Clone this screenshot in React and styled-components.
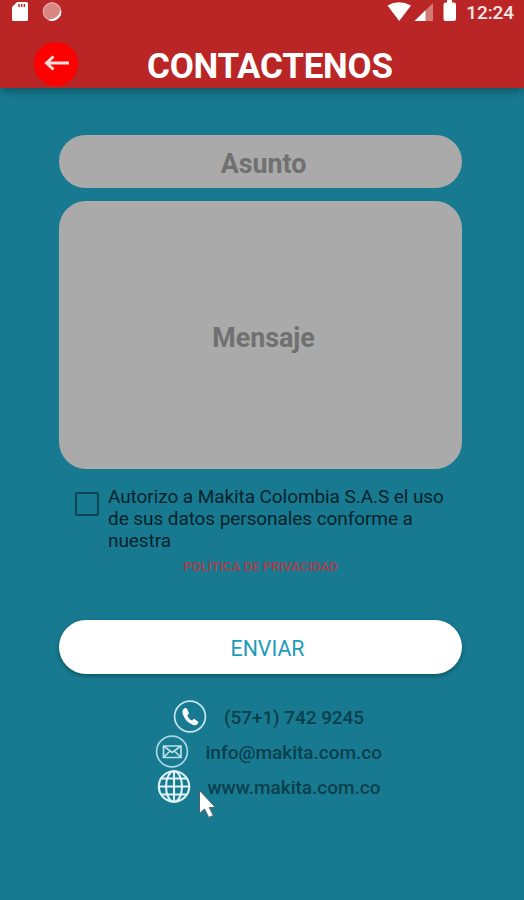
import React from "react";
import styled, { createGlobalStyle } from "styled-components";

const GlobalStyle = createGlobalStyle`
  * { box-sizing: border-box; }
  body { margin: 0; background: #187a91; font-family: Roboto, "Liberation Sans", sans-serif; }
`;

const Screen = styled.div`
  position: relative;
  display: flex;
  flex-direction: column;
  width: 524px;
  height: 900px;
  overflow: hidden;
  background: #187a91;
`;

const Header = styled.header`
  flex: none;
  height: 88px;
  background: #b92625;
  box-shadow: 0 2px 10px rgba(0, 40, 45, 0.55);
`;

const StatusBar = styled.div`
  display: flex;
  justify-content: space-between;
  height: 24px;
  padding: 0 10px 0 11px;
`;

const StatusGroup = styled.div`
  display: flex;
  align-items: flex-start;
`;

const Clock = styled.span`
  margin-left: 9px;
  font-size: 19px;
  font-weight: 500;
  line-height: 26px;
  letter-spacing: -0.1px;
  color: #fbe9e9;
`;

const TitleBar = styled.div`
  display: flex;
  align-items: center;
  height: 64px;
  padding: 17px 0 0 34px;
`;

const BackButton = styled.button`
  display: flex;
  flex: none;
  align-items: center;
  justify-content: center;
  width: 44px;
  height: 44px;
  margin-top: -2px;
  padding: 0;
  border: 0;
  border-radius: 50%;
  background: #ff0000;
`;

const Title = styled.h1`
  margin: 5px 0 0 69px;
  font-size: 35px;
  font-weight: 700;
  line-height: 40px;
  letter-spacing: -0.25px;
  color: #fff;
`;

const Form = styled.main`
  display: flex;
  flex-direction: column;
  width: 403px;
  margin: 47px 0 0 59px;
`;

const Field = styled.div`
  display: flex;
  align-items: center;
  justify-content: center;
  height: ${(p) => p.$height}px;
  margin-bottom: 13px;
  padding: ${(p) => p.$top}px 0 0 6px;
  border-radius: 27px;
  background: #aaa;
  color: #707070;
  font-size: 26.8px;
  font-weight: 700;
`;

const Consent = styled.label`
  display: flex;
  margin-top: 4px;
  padding-left: 16px;
  gap: 9px;
`;

const Checkbox = styled.span`
  flex: none;
  width: 24px;
  height: 24px;
  margin-top: 6px;
  border: 2.5px solid #0c4653;
  border-radius: 2px;
`;

const ConsentText = styled.span`
  font-size: 19px;
  line-height: 22px;
  letter-spacing: -0.08px;
  white-space: nowrap;
  color: #04232b;
`;

const PolicyLink = styled.a`
  height: 14px;
  margin-top: 8px;
  font-size: 13px;
  font-weight: 500;
  line-height: 14px;
  text-align: center;
  letter-spacing: 0.05px;
  color: #b03d47;
`;

const SendButton = styled.button`
  height: 54px;
  margin-top: 46px;
  padding: 2px 0 0 14px;
  border: 0;
  border-radius: 27px;
  background: #fff;
  box-shadow: 0 2px 4px rgba(0, 45, 50, 0.5);
  color: #1d9bb8;
  font-family: inherit;
  font-size: 21.3px;
`;

const Contacts = styled.footer`
  display: flex;
  flex-direction: column;
  align-items: center;
  margin-top: 25px;
  padding-left: 13px;
`;

const ContactRow = styled.div`
  display: flex;
  align-items: center;
  height: 35px;
  gap: 17px;
`;

const ContactText = styled.span`
  width: ${(p) => p.$width}px;
  padding-top: 2px;
  font-size: 19px;
  font-weight: 500;
  white-space: nowrap;
  letter-spacing: ${(p) => p.$spacing}px;
  color: #093f4d;
`;

const Cursor = styled.svg`
  position: absolute;
  left: 198px;
  top: 789px;
`;

const PhoneIcon = () => (
  <svg width="34" height="34" viewBox="0 0 34 34" fill="none">
    <circle cx="17" cy="16.500" r="15.4" stroke="#c5e5ed" strokeWidth="1.7" />
    <path d="M11.500 8.300c-2.300 1.300-2.700 3.700-1.300 7 1.800 4.400 5 7.700 9.200 9.400 2.700 1 4.600.4 5.700-1.800.3-.6.1-1-.3-1.300l-3-2.300c-.6-.4-1.100-.4-1.600.1l-1.200 1.100c-2.100-.9-4-3.100-4.700-5.300l1.200-1.100c.4-.4.5-.9.300-1.400l-1.800-4c-.5-.8-1.500-1-2.500-.4z" fill="#fff" />
  </svg>
);

const MailIcon = () => (
  <svg width="34" height="34" viewBox="0 0 34 34" fill="none">
    <circle cx="17" cy="16.500" r="15.4" stroke="#a8d5e1" strokeWidth="1.7" />
    <path d="M8.500 11h17.500v11.500h-17.500zM8.500 11l8.700 6.500 8.800-6.500M8.500 22.500l6.500-6.500M26 22.500l-6.500-6.500" stroke="#b9dfe8" strokeWidth="1.7" />
  </svg>
);

const GlobeIcon = () => (
  <svg width="34" height="34" viewBox="0 0 34 34" fill="none" stroke="#dff4f8" strokeWidth="2.1">
    <circle cx="17" cy="16.500" r="15.2" />
    <ellipse cx="17" cy="16.500" rx="8" ry="15.2" />
    <path d="M17 1.500v30M2 16.500h30M4.500 8.500h25M4.500 24.500h25" />
  </svg>
);

const contacts = [
  { text: "(57+1) 742 9245", width: 140, spacing: -0.08, Icon: PhoneIcon },
  { text: "info@makita.com.co", width: 177, spacing: 0, Icon: MailIcon },
  { text: "www.makita.com.co", width: 173, spacing: 0, Icon: GlobeIcon },
];

export default function App() {
  return (
    <>
      <GlobalStyle />
      <Screen>
        <Header>
          <StatusBar>
            <StatusGroup>
              <svg width="54" height="24" viewBox="0 0 54 24">
                <path d="M6 2h9.500q1.500 0 1.500 1.500v16q0 1.500-1.500 1.500h-13q-1.500 0-1.500-1.500V7z" fill="#fff" />
                <path d="M8 4v3M10.700 4v3M13.400 4v3" stroke="#b92625" strokeWidth="1.400" />
                <circle cx="41" cy="11.500" r="9.300" fill="#d98683" />
                <circle cx="41" cy="11.500" r="8.700" fill="none" stroke="#e5a9a6" strokeWidth="1.200" />
                <path d="M50 9.500a9.300 9.300 0 0 1-13 10.500q10.500-1 13-10.500z" fill="#fff" />
              </svg>
            </StatusGroup>
            <StatusGroup>
              <svg width="70" height="24" viewBox="388 0 70 24">
                <path d="M388.500 5.500Q400-1 412 5.500L400.200 21z" fill="#fff" />
                <path d="M434 3v18h-18.500z" fill="#d37a77" />
                <path d="M426.500 10.300V21h-11z" fill="#fff" />
                <path d="M448 0h5v2.500h2q2 0 2 2V19q0 2-2 2h-8.500q-2 0-2-2V4.500q0-2 2-2h1.500z" fill="#fff" />
              </svg>
              <Clock>12:24</Clock>
            </StatusGroup>
          </StatusBar>
          <TitleBar>
            <BackButton aria-label="Volver">
              <svg width="28" height="20" viewBox="0 0 28 20" fill="none" stroke="#ffdede" strokeWidth="3">
                <path d="M27 9H4.500M11.500 2.500L4.500 9l7 6.500" />
              </svg>
            </BackButton>
            <Title>CONTACTENOS</Title>
          </TitleBar>
        </Header>
        <Form>
          <Field $height={53} $top={4}>Asunto</Field>
          <Field $height={268} $top={5}>Mensaje</Field>
          <Consent>
            <Checkbox />
            <ConsentText>
              Autorizo a Makita Colombia S.A.S el uso<br />
              de sus datos personales conforme a<br />
              nuestra
            </ConsentText>
          </Consent>
          <PolicyLink>POLÍTICA DE PRIVACIDAD</PolicyLink>
          <SendButton>ENVIAR</SendButton>
        </Form>
        <Contacts>
          {contacts.map(({ text, width, spacing, Icon }) => (
            <ContactRow key={text}>
              <Icon />
              <ContactText $width={width} $spacing={spacing}>{text}</ContactText>
            </ContactRow>
          ))}
        </Contacts>
        <Cursor width="20" height="32" viewBox="0 0 20 32">
          <path d="M1.500 1.500v23l5-4.500 4.300 8.500 4.500-2-4-8h6.200z" fill="#fff" stroke="#4b6570" strokeWidth="1" />
        </Cursor>
      </Screen>
    </>
  );
}
